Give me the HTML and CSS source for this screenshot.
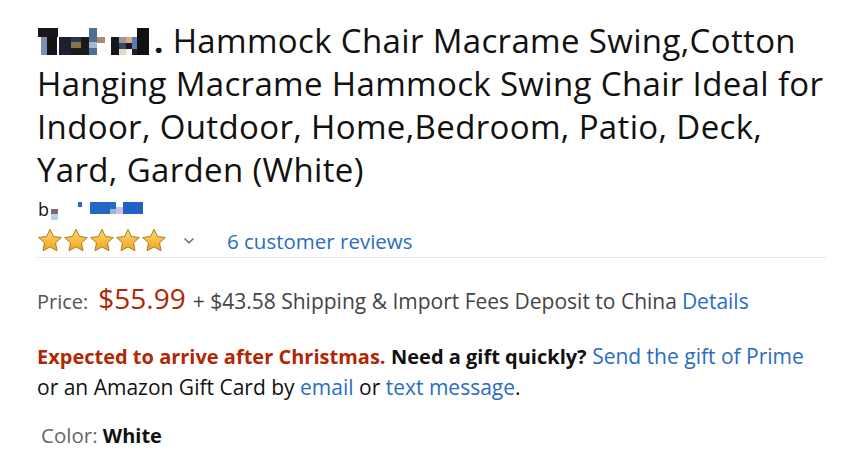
FILE: index.html
```html
<!DOCTYPE html>
<html>
<head>
<meta charset="utf-8">
<link rel="stylesheet" href="styles.css">
</head>
<body>
<div class="page">
  <h1 class="title"><svg class="mosaic" width="112" height="27" viewBox="0 0 112 27">
      <rect x="0" y="0" width="20" height="9" fill="#17171c"/>
      <rect x="3" y="9" width="6" height="18" fill="#7f8fb8"/>
      <rect x="9" y="9" width="10" height="18" fill="#141416"/>
      <rect x="21" y="9" width="12" height="18" fill="#1c2030"/>
      <rect x="33" y="9" width="10" height="5" fill="#2c3550"/>
      <rect x="33" y="14" width="10" height="6" fill="#86704d"/>
      <rect x="33" y="20" width="10" height="7" fill="#1b1b1b"/>
      <rect x="43" y="9" width="8" height="18" fill="#1a1a1c"/>
      <rect x="51" y="0" width="8" height="27" fill="#4d6e93"/>
      <rect x="51" y="14" width="8" height="6" fill="#9fb8d6"/>
      <rect x="59" y="9" width="8" height="6" fill="#a48d6d"/>
      <rect x="73" y="9" width="8" height="18" fill="#15171b"/>
      <rect x="81" y="9" width="7" height="6" fill="#9a9895"/>
      <rect x="81" y="15" width="7" height="6" fill="#3b4660"/>
      <rect x="81" y="21" width="7" height="6" fill="#e8d7c4"/>
      <rect x="88" y="9" width="6" height="6" fill="#d6a88d"/>
      <rect x="88" y="15" width="6" height="6" fill="#1a1a1a"/>
      <rect x="88" y="21" width="6" height="6" fill="#f4f4f4"/>
      <rect x="94" y="9" width="5" height="12" fill="#5e7cb3"/>
      <rect x="94" y="21" width="5" height="6" fill="#1f1f22"/>
      <rect x="99" y="0" width="12" height="27" fill="#111114"/>
    </svg><span class="dot">.</span> Hammock Chair Macrame Swing,Cotton Hanging Macrame Hammock Swing Chair Ideal for Indoor, Outdoor, Home,Bedroom, Patio, Deck, Yard, Garden (White)</h1>
  <div class="byline"><span class="b">b</span><svg class="bymosaic" width="96" height="22" viewBox="0 0 96 22">
      <rect x="2" y="10" width="7" height="5" fill="#7d6a66"/>
      <rect x="2" y="15" width="7" height="6" fill="#b8d1ea"/>
      <rect x="29" y="3" width="4" height="5" fill="#2a6ac2"/>
      <rect x="41" y="3" width="20" height="12" fill="#2466c1"/>
      <rect x="61" y="3" width="6" height="7" fill="#2a6ac3"/>
      <rect x="61" y="10" width="6" height="5" fill="#9ab5de"/>
      <rect x="67" y="8" width="7" height="7" fill="#d4bde0"/>
      <rect x="74" y="3" width="20" height="12" fill="#1f62c0"/>
    </svg></div>
  <div class="ratings">
    <span class="stars">
      <svg width="130" height="26" viewBox="0 0 130 26">
        <defs>
          <linearGradient id="g" x1="0" y1="0" x2="0" y2="1">
            <stop offset="0" stop-color="#ffd96b"/>
            <stop offset="1" stop-color="#f0a322"/>
          </linearGradient>
          <path id="s" d="M13 1.3l3.4 7.2 7.9 1-5.8 5.4 1.5 7.8L13 18.9l-7 3.8 1.5-7.8L1.7 9.5l7.9-1z"/>
        </defs>
        <use href="#s" x="0" fill="url(#g)" stroke="#b07a1c" stroke-width="1"/>
        <use href="#s" x="26" fill="url(#g)" stroke="#b07a1c" stroke-width="1"/>
        <use href="#s" x="52" fill="url(#g)" stroke="#b07a1c" stroke-width="1"/>
        <use href="#s" x="78" fill="url(#g)" stroke="#b07a1c" stroke-width="1"/>
        <use href="#s" x="104" fill="url(#g)" stroke="#b07a1c" stroke-width="1"/>
      </svg>
    </span>
    <svg class="chev" width="12" height="8" viewBox="0 0 12 8"><path d="M1.5 1.5l4.5 4.2 4.5-4.2" fill="none" stroke="#666" stroke-width="1.4"/></svg>
    <a class="link reviews">6 customer reviews</a>
  </div>
  <hr class="divider">
  <div class="price-row">
    <span class="label">Price:</span>
    <span class="price">$55.99</span>
    <span class="ship">+ $43.58 Shipping &amp; Import Fees Deposit to China</span>
    <a class="link">Details</a>
  </div>
  <div class="gift">
    <span class="late">Expected to arrive after Christmas.</span> <b class="need">Need a gift quickly?</b> <a class="link">Send the gift of Prime</a><br>
    or an Amazon Gift Card by <a class="link">email</a> or <a class="link">text message</a>.
  </div>
  <div class="color"><span class="clabel">Color:</span> <b class="cval">White</b></div>
</div>
</body>
</html>
```

FILE: styles.css
```css
html, body { margin: 0; padding: 0; background: #fff; }
body { font-family: "Open Sans", "Liberation Sans", sans-serif; color: #111; }
.page { padding: 19px 0 0 37px; width: 790px; }
.title {
  font-weight: 400;
  font-size: 33px;
  line-height: 43px;
  letter-spacing: 0.35px;
  margin: 0;
  color: #111;
}
.mosaic { vertical-align: -2px; margin-left: 1px; }
.dot { font-weight: 700; margin-left: 4px; }
.byline { font-size: 18px; line-height: 20px; margin-top: 8px; height: 22px; display: flex; align-items: flex-start; }
.b { margin-left: 1px; }
.ratings { display: flex; align-items: center; height: 26px; margin-top: 7px; }
.stars svg { display: block; }
.chev { margin-left: 16px; }
.reviews { margin-left: 32px; font-size: 20.5px; }
.link { color: #2a6cc4; text-decoration: none; }
.divider { border: 0; border-top: 1px solid #e7e7e7; margin: 3px 0 0 0; width: 789px; }
.price-row { margin-top: 21px; height: 30px; font-size: 21px; color: #444; display: flex; align-items: baseline; }
.label { font-size: 20px; color: #555; margin-right: 10px; }
.price { font-size: 28px; color: #b12704; margin-right: 7px; }
.ship { margin-right: 5px; }
.gift { margin-top: 32px; font-size: 21px; line-height: 31px; color: #111; }
.late { color: #b12704; font-weight: 700; font-size: 20px; }
.need { font-weight: 700; font-size: 20px; }
.color { margin-top: 20px; font-size: 20.5px; line-height: 24px; padding-left: 4px; }
.clabel { color: #666; }
.cval { font-size: 20px; }
```
